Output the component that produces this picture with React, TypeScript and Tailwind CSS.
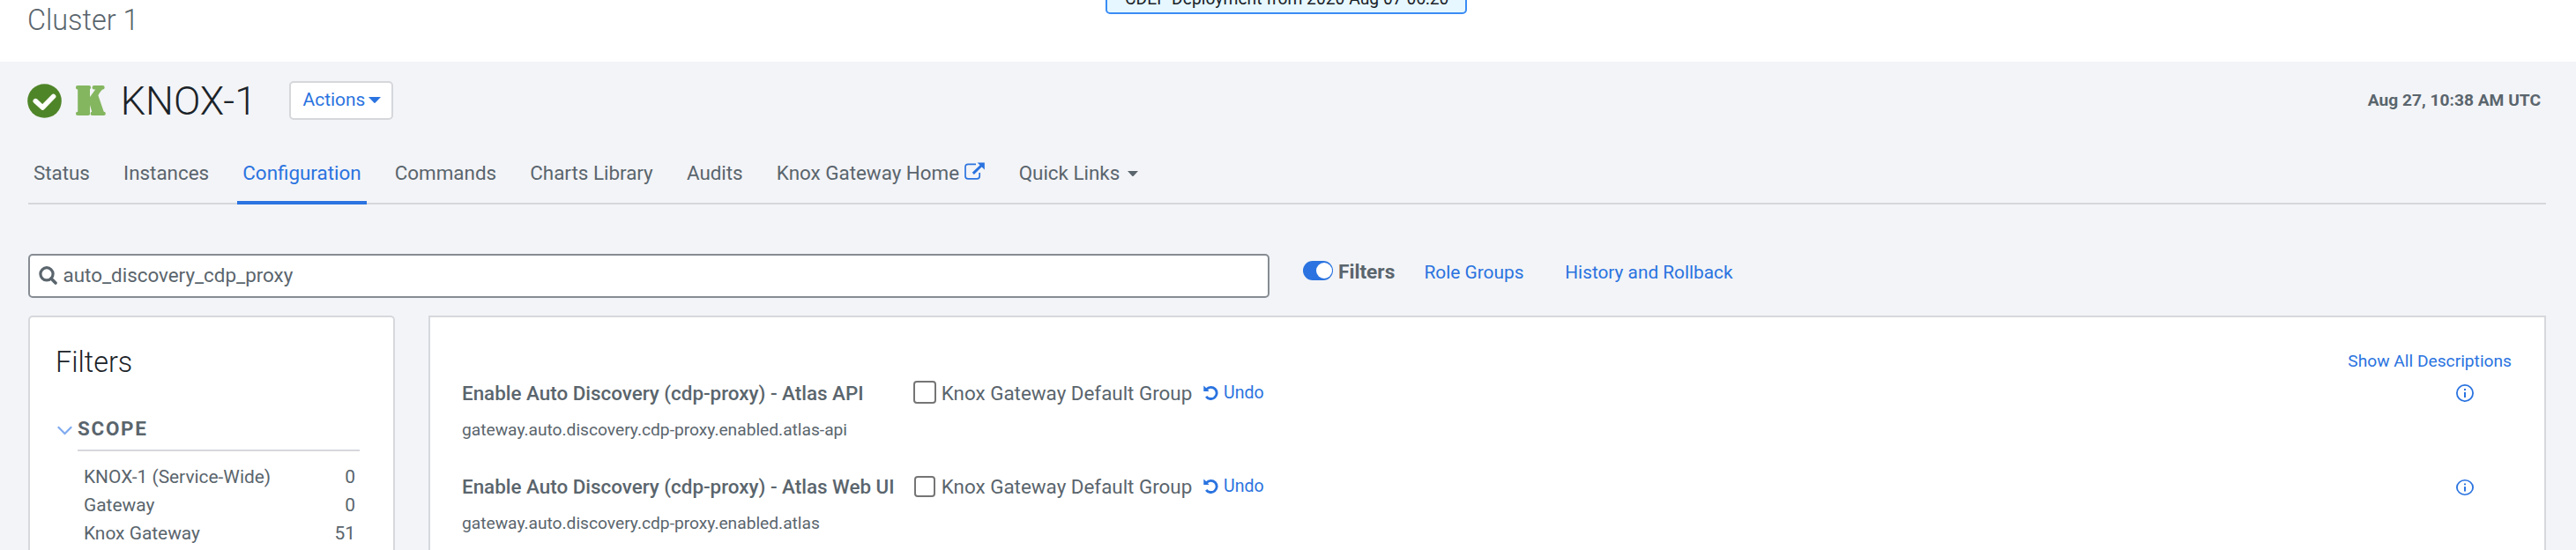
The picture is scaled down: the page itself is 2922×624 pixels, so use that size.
import type { ReactNode } from 'react';

function CheckCircle() {
  return (
    <svg className="h-[39px] w-[39px] shrink-0" viewBox="0 0 39 39">
      <circle cx="19.5" cy="19.5" r="19.3" fill="#4f8529" />
      <path d="M9.3 19.6 17.3 27 29.6 14.4" fill="none" stroke="#fff" strokeWidth="5.6" strokeLinejoin="round" strokeLinecap="round" />
    </svg>
  );
}

function KnoxLogo() {
  return (
    <svg className="ml-[15.7px] h-[34px] w-[34px] shrink-0" viewBox="0 0 34 34" fill="#84b660">
      <rect x="2.2" y="1" width="13.8" height="32" />
      <rect x="0" y="0" width="17" height="4.6" rx="2" />
      <rect x="0" y="29.8" width="16" height="4.2" rx="2" />
      <rect x="18.6" y="0" width="14" height="4.6" rx="2" />
      <rect x="16.6" y="29.8" width="17.2" height="4.2" rx="2" />
      <path d="M22.5 4 L30.5 4 C28.4 6.2 26.6 8.6 25.4 11.2 L32 30.6 H18.4 L15 18.6 V14.6 Z" />
    </svg>
  );
}

function Caret({ className }: { className: string }) {
  return (
    <svg className={className} viewBox="0 0 14 7" preserveAspectRatio="none" fill="currentColor">
      <path d="M0 0 H14 L7.8 6.6 Q7 7.3 6.2 6.6 Z" />
    </svg>
  );
}

function ExternalIcon() {
  return (
    <svg className="ml-[6.4px] h-[20px] w-[23px] shrink-0 text-[#2a73e0]" viewBox="0 0 23 20" fill="none" stroke="currentColor">
      <path d="M13 2.3 H4.2 Q1 2.3 1 5.4 V15.7 Q1 18.8 4.2 18.8 H14 Q17.2 18.8 17.2 15.7 V12" strokeWidth="1.7" />
      <path d="M9.8 12.8 L19 4" strokeWidth="3" />
      <path d="M14.6 0.4 H22.8 V8.4 Z" fill="currentColor" stroke="none" />
    </svg>
  );
}

function SearchIcon() {
  return (
    <svg className="h-[21px] w-[21px] shrink-0" viewBox="0 0 21 21" fill="none" stroke="#5a656d">
      <circle cx="9" cy="8.8" r="7.1" strokeWidth="3.2" />
      <path d="M14 14 L19 19" strokeWidth="3.6" strokeLinecap="round" />
    </svg>
  );
}

function UndoIcon() {
  return (
    <svg className="h-[17px] w-[17px] shrink-0" viewBox="0 0 17 17" fill="none">
      <path d="M3.6 4.6 A6.6 6.6 0 1 1 3.2 12.8" stroke="currentColor" strokeWidth="2.9" />
      <path d="M0.3 0.4 L2.2 2.3 L6.6 6.9 H0.3 Z" fill="currentColor" />
    </svg>
  );
}

function InfoIcon({ className }: { className: string }) {
  return (
    <svg className={className} viewBox="0 0 20 20" preserveAspectRatio="none" fill="none">
      <circle cx="10" cy="10" r="9.1" stroke="currentColor" strokeWidth="1.8" />
      <rect x="9" y="5" width="2" height="2" fill="currentColor" />
      <rect x="9" y="9" width="2" height="6" fill="currentColor" />
    </svg>
  );
}

function Tab({ children, active = false }: { children: ReactNode; active?: boolean }) {
  return (
    <div
      className={
        active
          ? 'flex h-[74px] items-start border-b-4 border-[#2a73e0] px-[6.7px] pt-[26px] text-[#2a73e0]'
          : 'flex h-[74px] items-start px-[6.7px] pt-[26px]'
      }
    >
      {children}
    </div>
  );
}

const scopes = [
  { name: 'KNOX-1 (Service-Wide)', count: 0 },
  { name: 'Gateway', count: 0 },
  { name: 'Knox Gateway', count: 51 },
];

const settings = [
  {
    title: 'Enable Auto Discovery (cdp-proxy) - Atlas API',
    param: 'gateway.auto.discovery.cdp-proxy.enabled.atlas-api',
    boxWrap: 'flex w-[31.8px] shrink-0',
    box: 'mt-[2px] h-[26px] w-[26px] shrink-0 rounded-[4px] border-2 border-[#757575] bg-white',
    info: 'mt-[6px] h-[20px] w-[20px] shrink-0',
  },
  {
    title: 'Enable Auto Discovery (cdp-proxy) - Atlas Web UI',
    param: 'gateway.auto.discovery.cdp-proxy.enabled.atlas',
    boxWrap: 'flex w-[31.8px] shrink-0 pl-px',
    box: 'mt-[4px] h-[24px] w-[24px] shrink-0 rounded-[4px] border-2 border-[#757575] bg-white',
    info: 'mt-[8px] h-[18px] w-[20px] shrink-0',
  },
];

export default function App() {
  return (
    <div className="h-[624px] w-[2922px] overflow-hidden bg-[#f3f4f7] font-['Roboto',sans-serif] text-[#5a656d]">
      <header className="relative h-[70px] bg-white pt-[3px] pl-[31px]">
        <h2 className="text-[32.4px] leading-[40px] font-light">Cluster 1</h2>
        <div className="absolute -top-5 left-[1254px] h-[36px] w-[410px] rounded-[5px] border-2 border-[#3a8cf5] bg-[#e6f7ff] pt-[5px] pl-[20px] text-[19.3px] leading-[23px] whitespace-nowrap text-[#1b2329]">
          CDEP Deployment from 2020 Aug 07 06:20
        </div>
      </header>

      <div className="flex h-[88px] items-center pr-[40px] pl-[31px]">
        <CheckCircle />
        <KnoxLogo />
        <h1 className="mt-px ml-[17px] w-[191.3px] text-[44.9px] leading-[55px] font-light whitespace-nowrap text-[#1b2329]">KNOX-1</h1>
        <button className="flex h-[44px] w-[118px] items-start rounded-[5px] border-2 border-[#d5d7db] bg-white pt-[7px] pl-[13.6px] text-[20.9px] leading-[24px] text-[#2a73e0]">
          Actions
          <Caret className="mt-[9px] ml-[4px] h-[7px] w-[14px]" />
        </button>
        <div className="ml-auto -mt-px text-[19.2px] leading-[24px] font-bold">Aug 27, 10:38 AM UTC</div>
      </div>

      <nav className="mr-[34px] ml-[32px] flex h-[74px] border-b-2 border-[#d5d7da] text-[22.4px] leading-[24px] whitespace-nowrap">
        <div className="-ml-[0.8px] flex gap-[24.8px]">
          <Tab>Status</Tab>
          <Tab>Instances</Tab>
          <Tab active>Configuration</Tab>
          <Tab>Commands</Tab>
          <Tab>Charts Library</Tab>
          <Tab>Audits</Tab>
          <Tab>
            Knox Gateway Home
            <ExternalIcon />
          </Tab>
          <Tab>
            Quick Links
            <Caret className="mt-[10px] ml-[9px] h-[6px] w-[12px]" />
          </Tab>
        </div>
      </nav>

      <div className="mt-[56px] ml-[32px] flex h-[50px] items-start whitespace-nowrap">
        <div className="flex h-[50px] w-[1408px] items-start rounded-[5px] border-2 border-[#868c93] bg-white pt-[10px] pl-[10px] text-[22.4px] leading-[24px]">
          <div className="pt-[2px]">
            <SearchIcon />
          </div>
          <span className="ml-[6.6px]">auto_discovery_cdp_proxy</span>
        </div>
        <div className="mt-[8px] ml-[38.4px] flex h-[22px] w-[34px] items-center justify-end rounded-full bg-[#2a73e0] pr-[1px]">
          <div className="h-[18px] w-[18px] rounded-full bg-white" />
        </div>
        <span className="mt-[8px] ml-[5.6px] w-[97.4px] text-[22.7px] leading-[25px] font-bold">Filters</span>
        <span className="mt-[9px] w-[159.9px] text-[20.9px] leading-[24px] text-[#2a73e0]">Role Groups</span>
        <span className="mt-[9px] text-[20.8px] leading-[24px] text-[#2a73e0]">History and Rollback</span>
      </div>

      <div className="mt-[20px] mr-[34px] ml-[32px] flex h-[266px] gap-[38px]">
        <aside className="w-[416px] rounded-t-[5px] border-2 border-b-0 border-[#d6d8dd] bg-white pt-[31px] pl-[28px]">
          <h3 className="pl-px text-[32.4px] leading-[40px] font-light text-[#1b2329]">Filters</h3>
          <div className="mt-[43px] flex h-[38px]">
            <svg className="mt-[9px] ml-[3px] h-[11px] w-[17px]" viewBox="0 0 17 11" fill="none" stroke="#7faaf0" strokeWidth="2.2">
              <path d="M0.8 1.2 8.5 9 16.2 1.2" />
            </svg>
            <div className="ml-[6px] h-[38px] w-[320px] border-b-2 border-[#d6d8dd] text-[22.4px] leading-[24px] font-bold tracking-[1.75px]">
              SCOPE
            </div>
          </div>
          <div className="mt-[13px] ml-[33px] w-[308px] text-[20.9px] leading-[32px]">
            {scopes.map((s) => (
              <div key={s.name} className="flex justify-between">
                <span>{s.name}</span>
                <span>{s.count}</span>
              </div>
            ))}
          </div>
        </aside>

        <main className="flex-1 border-2 border-b-0 border-[#d6d8dd] bg-white pt-[38px] pl-[36px] whitespace-nowrap">
          <div className="pr-[37px] text-right text-[19.2px] leading-[23px] text-[#2a73e0]">Show All Descriptions</div>
          <div className="mt-[9px]">
            {settings.map((s) => (
              <div key={s.param} className="flex h-[106px] items-start">
                <div className="w-[512px] shrink-0">
                  <div className="mt-[4px] text-[22.4px] leading-[24px] font-medium">{s.title}</div>
                  <div className="mt-[18px] text-[19.2px] leading-[23px]">{s.param}</div>
                </div>
                <div className={s.boxWrap}>
                  <div className={s.box} />
                </div>
                <span className="mt-[4px] w-[297.2px] shrink-0 text-[22.4px] leading-[24px]">Knox Gateway Default Group</span>
                <a className="mt-[4px] flex text-[19.5px] leading-[23px] text-[#2a73e0]">
                  <span className="mt-[2.5px] mr-[6px]">
                    <UndoIcon />
                  </span>
                  Undo
                </a>
                <div className="mr-[80px] ml-auto text-[#2a73e0]">
                  <InfoIcon className={s.info} />
                </div>
              </div>
            ))}
          </div>
        </main>
      </div>
    </div>
  );
}
